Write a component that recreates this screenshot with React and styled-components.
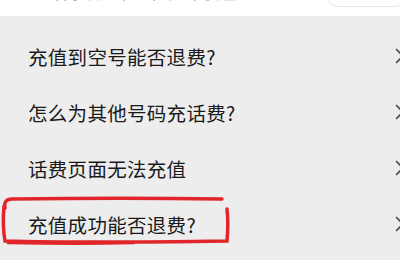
import React from "react";
import styled, { createGlobalStyle } from "styled-components";

const Global = createGlobalStyle`
  html, body {
    margin: 0;
    padding: 0;
    background: #ededed;
    overflow: hidden;
  }
  * { box-sizing: border-box; }
`;

const items = [
  "充值到空号能否退费?",
  "怎么为其他号码充话费?",
  "话费页面无法充值",
  "充值成功能否退费?",
];

export default function App() {
  return (
    <Page>
      <Global />
      <Header>
        <HeaderTitle>话费充值常见问题</HeaderTitle>
        <SearchBox />
      </Header>
      <List>
        {items.map((t, i) => (
          <Row key={i}>
            <Label>{t}</Label>
            <Chevron viewBox="0 0 10 16">
              <path d="M1 1 L8 8 L1 15" fill="none" stroke="#4a4a4a" strokeWidth="1.6" />
            </Chevron>
          </Row>
        ))}
        <Mark viewBox="0 0 240 60">
          <path
            d="M5 12 C4 6 6 3 12 3 C80 2 160 2 222 3"
            fill="none"
            stroke="#e0262b"
            strokeWidth="3.5"
            strokeLinecap="round"
          />
          <path
            d="M4 10 C3 22 3 34 5 45 C80 47 160 46 227 45 C228 34 228 22 227 13"
            fill="none"
            stroke="#e0262b"
            strokeWidth="3.5"
            strokeLinecap="round"
          />
          <path
            d="M8 47 C50 48 100 48 134 47"
            fill="none"
            stroke="#e0262b"
            strokeWidth="2.5"
            strokeLinecap="round"
          />
        </Mark>
      </List>
    </Page>
  );
}

const Page = styled.div`
  width: 400px;
  height: 260px;
  overflow: hidden;
  background: #ededed;
  font-family: "Noto Sans CJK SC", "Noto Sans", sans-serif;
`;

const Header = styled.div`
  height: 16px;
  background: #ffffff;
  display: flex;
  align-items: flex-end;
  justify-content: space-between;
  overflow: hidden;
`;

const HeaderTitle = styled.div`
  margin-left: 48px;
  margin-bottom: 12px;
  font-size: 20px;
  line-height: 20px;
  color: #9a9a9a;
  letter-spacing: 4px;
  transform: translateY(-3px);
`;

const SearchBox = styled.div`
  width: 80px;
  height: 30px;
  margin-bottom: 9px;
  margin-right: -6px;
  border: 1px solid #e6e6e6;
  border-radius: 12px;
`;

const List = styled.div`
  position: relative;
  padding-top: 12px;
`;

const Row = styled.div`
  height: 56px;
  display: flex;
  align-items: center;
  justify-content: space-between;
  padding-left: 28px;
  margin-right: -5px;
`;

const Label = styled.span`
  font-size: 19.5px;
  color: #1a1a1a;
  letter-spacing: 0.3px;
`;

const Chevron = styled.svg`
  width: 10px;
  height: 16px;
`;

const Mark = styled.svg`
  position: absolute;
  left: 0;
  top: 180px;
  width: 240px;
  height: 60px;
`;
